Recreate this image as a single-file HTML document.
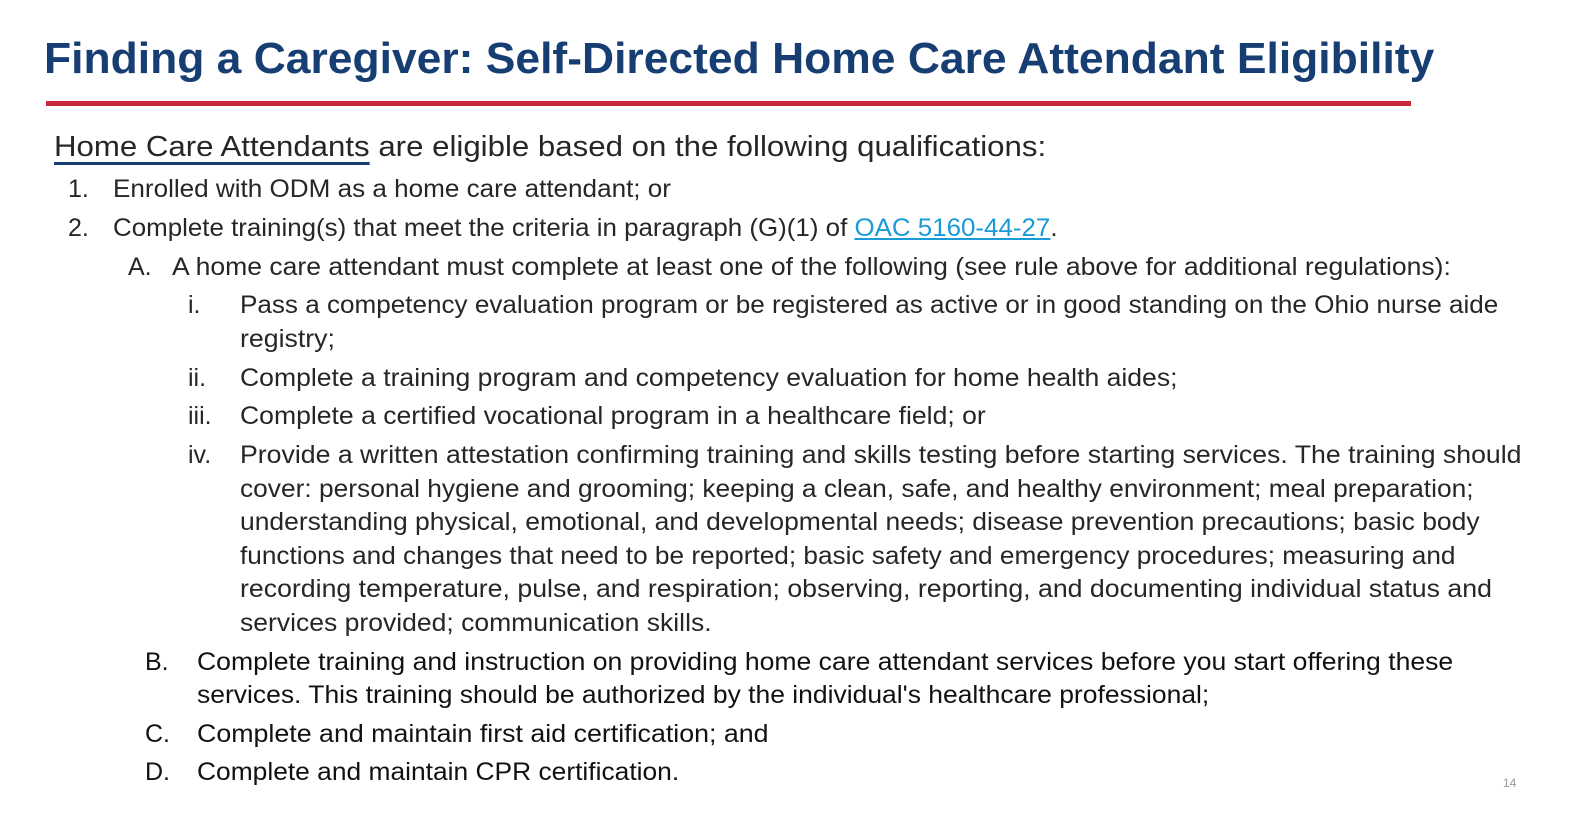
<!DOCTYPE html>
<html><head><meta charset="utf-8"><style>
body{margin:0;width:1585px;height:830px;background:#fff;position:relative;overflow:hidden;font-family:"Liberation Sans",sans-serif;color:#262626}
.L{position:absolute;white-space:nowrap;transform-origin:0 50%;line-height:1;font-size:25px}
.t{font-size:44px;font-weight:bold;color:#173e73}
a{color:#1a9ad6;text-decoration:underline}
.u{text-decoration:underline;text-decoration-color:#173e73;text-decoration-thickness:3px;text-underline-offset:6px}
.n{position:absolute;font-size:25px;line-height:1}
</style></head><body>
<div class="L t" style="left:44px;top:37px" data-w="1390">Finding a Caregiver: Self-Directed Home Care Attendant Eligibility</div>
<div style="position:absolute;left:46px;top:101px;width:1365px;height:5px;background:#c8283a"></div>
<div class="L" style="left:54px;top:133px;font-size:29px" data-w="992"><span class="u">Home Care Attendants</span> are eligible based on the following qualifications:</div>
<div class="n" style="left:68px;top:177px">1.</div>
<div class="L" style="left:113px;top:177px" data-w="558">Enrolled with ODM as a home care attendant; or</div>
<div class="n" style="left:68px;top:216px">2.</div>
<div class="L" style="left:113px;top:216px" data-w="945">Complete training(s) that meet the criteria in paragraph (G)(1) of <a>OAC 5160-44-27</a>.</div>
<div class="n" style="left:128px;top:255px">A.</div>
<div class="L" style="left:172px;top:255px" data-w="1279">A home care attendant must complete at least one of the following (see rule above for additional regulations):</div>
<div class="n" style="left:188px;top:293px">i.</div>
<div class="L" style="left:240px;top:293px" data-w="1258">Pass a competency evaluation program or be registered as active or in good standing on the Ohio nurse aide</div>
<div class="L" style="left:240px;top:327px" data-w="95">registry;</div>
<div class="n" style="left:188px;top:366px">ii.</div>
<div class="L" style="left:240px;top:366px" data-w="937">Complete a training program and competency evaluation for home health aides;</div>
<div class="n" style="left:188px;top:404px">iii.</div>
<div class="L" style="left:240px;top:404px" data-w="746">Complete a certified vocational program in a healthcare field; or</div>
<div class="n" style="left:188px;top:443px">iv.</div>
<div class="L" style="left:240px;top:443px" data-w="1282">Provide a written attestation confirming training and skills testing before starting services. The training should</div>
<div class="L" style="left:240px;top:477px" data-w="1234">cover: personal hygiene and grooming; keeping a clean, safe, and healthy environment; meal preparation;</div>
<div class="L" style="left:240px;top:510px" data-w="1240">understanding physical, emotional, and developmental needs; disease prevention precautions; basic body</div>
<div class="L" style="left:240px;top:544px" data-w="1215">functions and changes that need to be reported; basic safety and emergency procedures; measuring and</div>
<div class="L" style="left:240px;top:577px" data-w="1252">recording temperature, pulse, and respiration; observing, reporting, and documenting individual status and</div>
<div class="L" style="left:240px;top:611px" data-w="472">services provided; communication skills.</div>
<div class="n" style="left:145px;top:650px;color:#111">B.</div>
<div class="L" style="left:197px;top:650px;color:#111" data-w="1256">Complete training and instruction on providing home care attendant services before you start offering these</div>
<div class="L" style="left:197px;top:683px;color:#111" data-w="1012">services. This training should be authorized by the individual's healthcare professional;</div>
<div class="n" style="left:145px;top:722px;color:#111">C.</div>
<div class="L" style="left:197px;top:722px;color:#111" data-w="572">Complete and maintain first aid certification; and</div>
<div class="n" style="left:145px;top:760px;color:#111">D.</div>
<div class="L" style="left:197px;top:760px;color:#111" data-w="482">Complete and maintain CPR certification.</div>
<div style="position:absolute;left:1503px;top:776px;font-size:12px;color:#999">14</div>
<script>
document.querySelectorAll('.L').forEach(function(e){var w=+e.getAttribute('data-w');var s=e.scrollWidth;if(s)e.style.transform='scaleX('+(w/s)+')';});
</script>
</body></html>
